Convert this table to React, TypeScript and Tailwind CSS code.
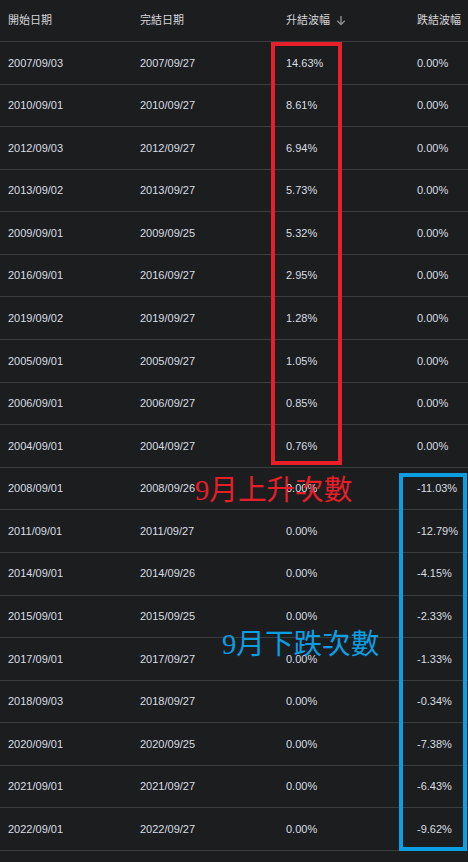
import React from 'react';

type Row = { start: string; end: string; up: string; down: string };

const rows: Row[] = [
  { start: '2007/09/03', end: '2007/09/27', up: '14.63%', down: '0.00%' },
  { start: '2010/09/01', end: '2010/09/27', up: '8.61%', down: '0.00%' },
  { start: '2012/09/03', end: '2012/09/27', up: '6.94%', down: '0.00%' },
  { start: '2013/09/02', end: '2013/09/27', up: '5.73%', down: '0.00%' },
  { start: '2009/09/01', end: '2009/09/25', up: '5.32%', down: '0.00%' },
  { start: '2016/09/01', end: '2016/09/27', up: '2.95%', down: '0.00%' },
  { start: '2019/09/02', end: '2019/09/27', up: '1.28%', down: '0.00%' },
  { start: '2005/09/01', end: '2005/09/27', up: '1.05%', down: '0.00%' },
  { start: '2006/09/01', end: '2006/09/27', up: '0.85%', down: '0.00%' },
  { start: '2004/09/01', end: '2004/09/27', up: '0.76%', down: '0.00%' },
  { start: '2008/09/01', end: '2008/09/26', up: '0.00%', down: '-11.03%' },
  { start: '2011/09/01', end: '2011/09/27', up: '0.00%', down: '-12.79%' },
  { start: '2014/09/01', end: '2014/09/26', up: '0.00%', down: '-4.15%' },
  { start: '2015/09/01', end: '2015/09/25', up: '0.00%', down: '-2.33%' },
  { start: '2017/09/01', end: '2017/09/27', up: '0.00%', down: '-1.33%' },
  { start: '2018/09/03', end: '2018/09/27', up: '0.00%', down: '-0.34%' },
  { start: '2020/09/01', end: '2020/09/25', up: '0.00%', down: '-7.38%' },
  { start: '2021/09/01', end: '2021/09/27', up: '0.00%', down: '-6.43%' },
  { start: '2022/09/01', end: '2022/09/27', up: '0.00%', down: '-9.62%' },
];

const grid = 'grid grid-cols-[140px_146px_131px_1fr] items-center';
const noteFont = { fontFamily: '"Liberation Serif", "Noto Sans CJK TC", serif' };

export default function App() {
  return (
    <div
      className="relative w-[468px] h-[862px] overflow-hidden bg-[#1c1d1f] text-[11px] text-[#d9dde2]"
      style={{ fontFamily: '"Liberation Sans", "Noto Sans CJK TC", sans-serif' }}
    >
      {/* header */}
      <div className={`${grid} h-[42px] border-b border-[#3b3c3e] text-[#d4d6d8]`}>
        <div className="pl-2">開始日期</div>
        <div>完結日期</div>
        <div className="flex items-center gap-[6px]">
          升結波幅
          <svg width="10" height="11" viewBox="0 0 10 11" className="text-[#8c8d8f]">
            <path d="M5 1v8.5M1.2 5.8L5 9.6l3.8-3.8" fill="none" stroke="currentColor" strokeWidth="1.4" />
          </svg>
        </div>
        <div>跌結波幅</div>
      </div>

      {/* rows */}
      {rows.map((r) => (
        <div key={r.start} className={`${grid} h-[42.58px] border-b border-[#3b3c3e]`}>
          <div className="pl-2">{r.start}</div>
          <div>{r.end}</div>
          <div>{r.up}</div>
          <div>{r.down}</div>
        </div>
      ))}

      {/* annotations drawn over the table */}
      <div className="absolute left-[271px] top-[42px] w-[71px] h-[423px] border-[4px] border-[#e61f28]" />
      <div
        className="absolute left-[195px] top-[474px] text-[28.6px] leading-[34px] text-[#e61f28] whitespace-nowrap"
        style={noteFont}
      >
        9月上升次數
      </div>
      <div className="absolute left-[399px] top-[473px] w-[68px] h-[378px] border-[4px] border-[#0b9ee2]" />
      <div
        className="absolute left-[222px] top-[628px] text-[28.6px] leading-[34px] text-[#0b9ee2] whitespace-nowrap"
        style={noteFont}
      >
        9月下跌次數
      </div>
    </div>
  );
}
